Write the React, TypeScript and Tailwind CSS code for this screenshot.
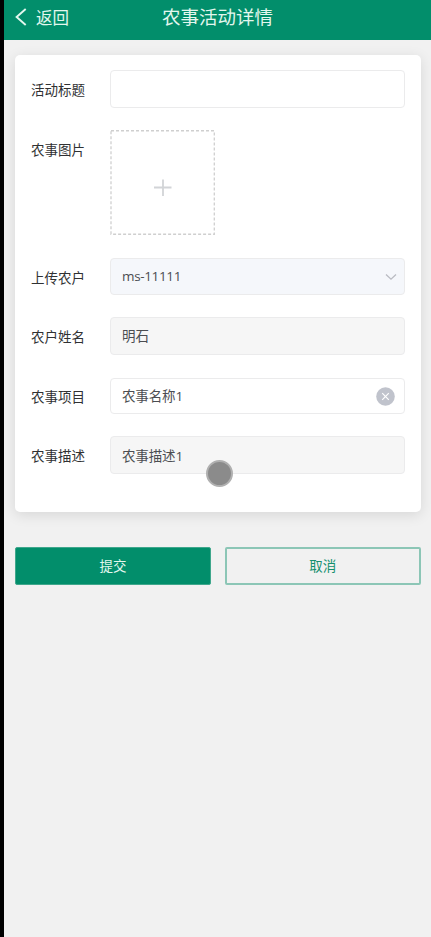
import React from "react";

interface FormRowProps {
    label: string,
    className?: string,
    children: React.ReactNode
}

const FormRow: React.FC<FormRowProps> = ({ label, className, children }) => {
    return (
        <div className={`flex items-start ${className ?? ""}`}>
            <label className="w-20 shrink-0 pt-px pl-px text-[13.5px] leading-[38px] text-[#303133]">{label}</label>
            {children}
        </div>
    );
}

interface FieldProps {
    value?: string,
    className: string,
    children?: React.ReactNode
}

const Field: React.FC<FieldProps> = ({ value, className, children }) => {
    return (
        <div className={`flex flex-1 items-center justify-between rounded-[4px] border border-[#ebebec] pl-[11px] text-[13.5px] text-[#4b4d51] ${className}`}>
            <span>{value}</span>
            {children}
        </div>
    );
}

const App: React.FC = () => {
    return (
        <div className="relative min-h-screen border-l-4 border-black bg-[#f1f1f1] font-['Open_Sans','Noto_Sans_CJK_SC',sans-serif]">
            <header className="flex h-[39.5px] items-center bg-[#028e6b] pb-[3px] text-[#e3f7ee]">
                <button className="flex w-[158px] items-center pl-[11px] text-[16.5px]">
                    <svg className="-mt-[3px]" width="12" height="18" viewBox="0 0 12 18" fill="none" stroke="currentColor" strokeWidth="1.9">
                        <path d="M10.7 1L1.6 9l9.1 8" />
                    </svg>
                    <span className="mt-px ml-[9px]">返回</span>
                </button>
                <h1 className="-mt-[2px] text-[18.5px]">农事活动详情</h1>
            </header>

            <main className="pt-[15.5px] pr-[10.5px] pl-[11px]">
                <div className="h-[457px] rounded-[5px] bg-white pt-[15px] pr-[15.5px] pl-[15px] shadow-[0_3px_14px_rgba(0,0,0,0.11)]">
                    <FormRow label="活动标题" className="h-[38px]">
                        <Field className="h-[38px]" />
                    </FormRow>
                    <FormRow label="农事图片" className="mt-[22px]">
                        <div className="flex h-[105px] w-[105px] items-center justify-center">
                            <svg width="105" height="105" viewBox="0 0 105 105" fill="none">
                                <rect x="1" y="0.75" width="103.3" height="103.5" stroke="#cfcfcf" strokeWidth="1.3" strokeDasharray="3 2" />
                                <path d="M44 57.5h17.5M53 49.5v16.5" stroke="#d2d4d7" strokeWidth="1.8" />
                            </svg>
                        </div>
                    </FormRow>
                    <FormRow label="上传农户" className="mt-[23px] h-[37px]">
                        <Field value="ms-11111" className="h-[37px] bg-[#f5f7fb] tracking-[-0.35px]">
                            <svg className="mr-[7px]" width="12" height="8" viewBox="0 0 12 8" fill="none" stroke="#b9bbc2" strokeWidth="1.3">
                                <path d="M1 1.5l5 4.7 5-4.7" />
                            </svg>
                        </Field>
                    </FormRow>
                    <FormRow label="农户姓名" className="mt-[22px] h-[38px]">
                        <Field value="明石" className="h-[38px] bg-[#f6f6f6] pt-px" />
                    </FormRow>
                    <FormRow label="农事项目" className="mt-[22px] h-[38px]">
                        <Field value="农事名称1" className="mt-px h-9 tracking-[-0.15px]">
                            <svg className="mr-[9px]" width="19" height="19" viewBox="0 0 19 19" fill="none">
                                <circle cx="9.5" cy="9.5" r="9.3" fill="#c0c3cc" />
                                <path d="M6.2 6.2l6.6 6.6M12.8 6.2l-6.6 6.6" stroke="#fff" strokeWidth="1.2" />
                            </svg>
                        </Field>
                    </FormRow>
                    <FormRow label="农事描述" className="mt-[21px] h-[38px]">
                        <Field value="农事描述1" className="h-[38px] bg-[#f6f6f6] pt-[2px] tracking-[-0.15px]" />
                    </FormRow>
                </div>

                <div className="mt-[35px] flex gap-[14px] text-[13.5px]">
                    <button className="h-[38px] w-[196px] rounded-[2px] border border-[#3fa78c] bg-[#028e6b] pt-px text-[#e3f7ee]">提交</button>
                    <button className="h-[38px] flex-1 rounded-[2px] border-2 border-[#8cc6b6] pt-px text-[#14906f]">取消</button>
                </div>
            </main>

            {/* touch pointer */}
            <div className="absolute top-[460px] left-[202px] h-[27px] w-[27px] rounded-full border-2 border-[#b0b0b0] bg-[#8b8b8b]"></div>
        </div>
    );
}

export default App;
